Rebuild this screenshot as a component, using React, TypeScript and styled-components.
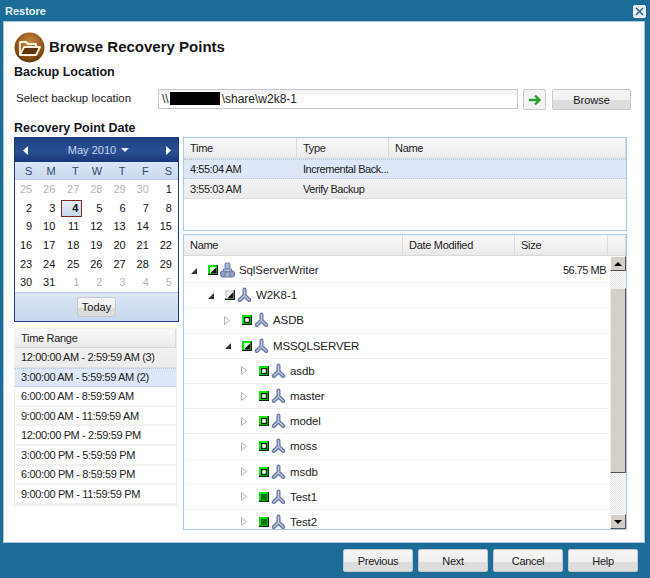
import React from "react";
import styled, { createGlobalStyle } from "styled-components";

const Global = createGlobalStyle`
  html, body { margin: 0; padding: 0; }
  body { font-family: "Liberation Sans", Arial, sans-serif; font-size: 11px; color: #1c1c1c; }
  * { box-sizing: border-box; }
`;

const days = [25, 26, 27, 28, 29, 30, 1, 2, 3, 4, 5, 6, 7, 8, 9, 10, 11, 12, 13, 14, 15, 16, 17, 18, 19, 20, 21, 22, 23, 24, 25, 26, 27, 28, 29, 30, 31, 1, 2, 3, 4, 5];

const ranges = [
  "12:00:00 AM - 2:59:59 AM (3)",
  "3:00:00 AM - 5:59:59 AM (2)",
  "6:00:00 AM - 8:59:59 AM",
  "9:00:00 AM - 11:59:59 AM",
  "12:00:00 PM - 2:59:59 PM",
  "3:00:00 PM - 5:59:59 PM",
  "6:00:00 PM - 8:59:59 PM",
  "9:00:00 PM - 11:59:59 PM",
];

type Status = "partial" | "mixed" | "hollow" | "full";
const tree: { name: string; depth: number; open: boolean; status: Status; size?: string; server?: boolean }[] = [
  { name: "SqlServerWriter", depth: 0, open: true, status: "partial", size: "56.75 MB", server: true },
  { name: "W2K8-1", depth: 1, open: true, status: "mixed" },
  { name: "ASDB", depth: 2, open: false, status: "hollow" },
  { name: "MSSQLSERVER", depth: 2, open: true, status: "partial" },
  { name: "asdb", depth: 3, open: false, status: "hollow" },
  { name: "master", depth: 3, open: false, status: "hollow" },
  { name: "model", depth: 3, open: false, status: "hollow" },
  { name: "moss", depth: 3, open: false, status: "hollow" },
  { name: "msdb", depth: 3, open: false, status: "hollow" },
  { name: "Test1", depth: 3, open: false, status: "full" },
  { name: "Test2", depth: 3, open: false, status: "full" },
];

function FolderLogo() {
  return (
    <svg width="31" height="31" viewBox="0 0 31 31">
      <defs>
        <radialGradient id="logoBall" cx="50%" cy="35%" r="70%">
          <stop offset="0%" stopColor="#c98a45" />
          <stop offset="65%" stopColor="#8f5518" />
          <stop offset="100%" stopColor="#4f2c08" />
        </radialGradient>
      </defs>
      <circle cx="15.5" cy="15.5" r="15" fill="url(#logoBall)" />
      <path d="M6 23 V10 H12 L14 12 H22 V15" fill="none" stroke="#fff4e2" strokeWidth="1.8" strokeLinejoin="round" />
      <path d="M6 23 L10 15 H26 L22 23 Z" fill="#5c3410" stroke="#fff4e2" strokeWidth="1.8" strokeLinejoin="round" />
    </svg>
  );
}

function NodeIcon() {
  return (
    <svg width="15" height="16" viewBox="0 0 15 16">
      <path d="M7.5 2.5 V8.5 L2.8 13 M7.5 8.5 L12.2 13" fill="none" stroke="#66769f" strokeWidth="4" strokeLinecap="round" strokeLinejoin="round" />
      <path d="M7.5 2.5 V8.5 L2.8 13 M7.5 8.5 L12.2 13" fill="none" stroke="#bcc8df" strokeWidth="1.5" strokeLinecap="round" strokeLinejoin="round" />
    </svg>
  );
}

function ServerIcon() {
  return (
    <svg width="15" height="16" viewBox="0 0 15 16">
      <rect x="5" y="1" width="5" height="6" rx="1.5" fill="#aab6d2" stroke="#66769f" />
      <path d="M3.5 7 H11.5 L12 10 H3 Z" fill="#c3cde2" stroke="#66769f" />
      <rect x="0.5" y="9" width="6.5" height="6" rx="2" fill="#8f9fc2" stroke="#66769f" />
      <rect x="8" y="9" width="6.5" height="6" rx="2" fill="#8f9fc2" stroke="#66769f" />
      <rect x="5" y="10" width="5" height="5" rx="1" fill="#a6b3d0" stroke="#66769f" />
    </svg>
  );
}

function StatusBox({ status }: { status: Status }) {
  const frame = status === "mixed" ? "#d8d8d8" : "#00e800";
  return (
    <svg width="10" height="10" viewBox="0 0 10 10">
      <rect width="10" height="10" fill={frame} />
      <path d="M10 0 V10 H0 V8.8 H8.8 V0 Z" fill="#0a1f0a" />
      {status === "hollow" && (
        <>
          <rect x="2" y="2" width="6" height="6" fill="#0a1f0a" />
          <rect x="3.2" y="3.2" width="3.6" height="3.6" fill="#fff" />
        </>
      )}
      {status === "full" && <rect x="2" y="2" width="6" height="6" fill="#08710a" />}
      {(status === "partial" || status === "mixed") && (
        <>
          <rect x="2" y="2" width="6.5" height="6.5" fill={status === "mixed" ? "#f2f2f2" : "#d6ffd6"} />
          <path d="M8.5 2 V8.5 H2 Z" fill="#111" />
        </>
      )}
    </svg>
  );
}

export default function App() {
  return (
    <Page>
      <Global />
      <TitleBar>
        <TitleText>Restore</TitleText>
        <CloseButton>
          <svg width="9" height="9" viewBox="0 0 9 9">
            <path d="M1 1 L8 8 M8 1 L1 8" stroke="#2b5f92" strokeWidth="1.4" />
          </svg>
        </CloseButton>
      </TitleBar>

      <Panel>
        <Heading>
          <FolderLogo />
          <HeadingText>Browse Recovery Points</HeadingText>
        </Heading>
        <SectionTitle>Backup Location</SectionTitle>
        <LocationRow>
          <FieldLabel>Select backup location</FieldLabel>
          <PathInput>
            \\<Redacted />\share\w2k8-1
          </PathInput>
          <GoButton>
            <svg width="14" height="12" viewBox="0 0 14 12">
              <path d="M1 6 H11 M7 1.5 L11.5 6 L7 10.5" fill="none" stroke="#2c9a2c" strokeWidth="2.4" />
            </svg>
          </GoButton>
          <BrowseButton>Browse</BrowseButton>
        </LocationRow>
        <DateTitle>Recovery Point Date</DateTitle>

        <Columns>
          <LeftColumn>
            <Calendar>
              <CalendarHead>
                <MonthArrow>
                  <svg width="5" height="9" viewBox="0 0 5 9"><path d="M5 0 V9 L0 4.5 Z" fill="#fff" /></svg>
                </MonthArrow>
                <MonthName>
                  May 2010
                  <svg width="8" height="4" viewBox="0 0 8 4"><path d="M0 0 H8 L4 4 Z" fill="#e6edf8" /></svg>
                </MonthName>
                <MonthArrow>
                  <svg width="5" height="9" viewBox="0 0 5 9"><path d="M0 0 V9 L5 4.5 Z" fill="#fff" /></svg>
                </MonthArrow>
              </CalendarHead>
              <WeekRow>
                {["S", "M", "T", "W", "T", "F", "S"].map((d, i) => (
                  <WeekDay key={i}>{d}</WeekDay>
                ))}
              </WeekRow>
              <DayGrid>
                {days.map((d, i) => (
                  <Day key={i} $muted={i < 6 || i > 36} $today={i === 9}>
                    {d}
                  </Day>
                ))}
              </DayGrid>
              <CalendarFoot>
                <TodayButton>Today</TodayButton>
              </CalendarFoot>
            </Calendar>

            <RangeList>
              <RangeHead>Time Range</RangeHead>
              {ranges.map((r, i) => (
                <RangeRow key={r} $kind={i === 0 ? "gray" : i === 1 ? "selected" : "plain"}>
                  {r}
                </RangeRow>
              ))}
            </RangeList>
          </LeftColumn>

          <RightColumn>
            <PointsTable>
              <PointsHead>
                <HeadCell>Time</HeadCell>
                <HeadCell>Type</HeadCell>
                <HeadCell>Name</HeadCell>
              </PointsHead>
              <PointRow $kind="selected">
                <span>4:55:04 AM</span>
                <span>Incremental Back...</span>
                <span />
              </PointRow>
              <PointRow $kind="gray">
                <span>3:55:03 AM</span>
                <span>Verify Backup</span>
                <span />
              </PointRow>
            </PointsTable>

            <FilesTable>
              <FilesHead>
                <HeadCell>Name</HeadCell>
                <HeadCell>Date Modified</HeadCell>
                <HeadCell>Size</HeadCell>
                <HeadCell />
              </FilesHead>
              <FilesBody>
                <TreeRows>
                  {tree.map((n) => (
                    <TreeRow key={n.name} $depth={n.depth}>
                      <Toggle>
                        {n.open ? (
                          <svg width="7" height="7" viewBox="0 0 7 7"><path d="M7 1 V7 H1 Z" fill="#333" /></svg>
                        ) : (
                          <svg width="6" height="9" viewBox="0 0 6 9"><path d="M0.5 0.5 V8.5 L5.5 4.5 Z" fill="#fff" stroke="#b5b5b5" /></svg>
                        )}
                      </Toggle>
                      <StatusBox status={n.status} />
                      {n.server ? <ServerIcon /> : <NodeIcon />}
                      <TreeName>{n.name}</TreeName>
                      {n.size && <TreeSize>{n.size}</TreeSize>}
                    </TreeRow>
                  ))}
                </TreeRows>
                <ScrollBar>
                  <ScrollButton>
                    <svg width="8" height="4" viewBox="0 0 8 4"><path d="M0 4 H8 L4 0 Z" fill="#000" /></svg>
                  </ScrollButton>
                  <ScrollGap $size={17} />
                  <ScrollThumb />
                  <ScrollGap $size={41} />
                  <ScrollButton>
                    <svg width="8" height="4" viewBox="0 0 8 4"><path d="M0 0 H8 L4 4 Z" fill="#000" /></svg>
                  </ScrollButton>
                </ScrollBar>
              </FilesBody>
            </FilesTable>
          </RightColumn>
        </Columns>
      </Panel>

      <Footer>
        <FootButton>Previous</FootButton>
        <FootButton>Next</FootButton>
        <FootButton>Cancel</FootButton>
        <FootButton>Help</FootButton>
      </Footer>
    </Page>
  );
}

const Page = styled.div`
  width: 650px;
  height: 578px;
  background: #1b6d97;
  display: flex;
  flex-direction: column;
  overflow: hidden;
`;

const TitleBar = styled.div`
  height: 22px;
  padding: 0 4px 0 5px;
  display: flex;
  align-items: center;
  justify-content: space-between;
`;

const TitleText = styled.div`
  color: #e8f2f8;
  font-size: 11px;
  font-weight: bold;
`;

const CloseButton = styled.div`
  width: 13px;
  height: 13px;
  border-radius: 2px;
  background: #e4edfa;
  border: 1px solid #f6f9fe;
  display: flex;
  align-items: center;
  justify-content: center;
`;

const Panel = styled.div`
  margin: 0 6px 0 4px;
  height: 520px;
  background: #fff;
  padding: 10px 0 0 10px;
  box-shadow: 0 0 0 1px #a9c6dd;
`;

const Heading = styled.div`
  height: 31px;
  display: flex;
  align-items: center;
  gap: 4px;
`;

const HeadingText = styled.h1`
  margin: 0 0 2px;
  font-size: 15px;
  font-weight: bold;
  color: #161616;
`;

const SectionTitle = styled.h2`
  margin: 2px 0 0;
  font-size: 12.5px;
  line-height: 15px;
  font-weight: bold;
  color: #14141e;
`;

const DateTitle = styled(SectionTitle)`
  margin: 11px 0 0;
`;

const LocationRow = styled.div`
  margin-top: 9px;
  height: 21px;
  display: flex;
  align-items: flex-start;
`;

const FieldLabel = styled.div`
  width: 144px;
  padding-left: 2px;
  font-size: 11.5px;
  line-height: 19px;
  color: #222;
`;

const PathInput = styled.div`
  width: 360px;
  height: 20px;
  padding-left: 3px;
  border: 1px solid #c3c7d6;
  font-size: 12px;
  line-height: 19px;
  white-space: nowrap;
  color: #222;
  background: linear-gradient(#f4f4f4 0, #f4f4f4 5px, #fff 5px);
`;

const Redacted = styled.span`
  display: inline-block;
  width: 50px;
  height: 13px;
  margin: 0 2px 0 1px;
  vertical-align: -2px;
  background: #000;
`;

const buttonFace = `
  border: 1px solid #c8c8c8;
  border-radius: 2px;
  background: linear-gradient(#f6f6f6 0, #f0f0f0 55%, #dcdcdc 55%, #dedede 100%);
  display: flex;
  align-items: center;
  justify-content: center;
  color: #1a1a1a;
`;

const GoButton = styled.div`
  ${buttonFace}
  width: 23px;
  height: 21px;
  margin-left: 5px;
  background: #f3f3f3;
`;

const BrowseButton = styled.div`
  ${buttonFace}
  width: 79px;
  height: 21px;
  margin-left: 6px;
`;

const Columns = styled.div`
  margin-top: 1px;
  display: flex;
  align-items: flex-start;
`;

const LeftColumn = styled.div`
  width: 169px;
`;

const Calendar = styled.div`
  width: 165px;
  height: 185px;
  border: 1px solid #1f3b78;
  display: flex;
  flex-direction: column;
`;

const CalendarHead = styled.div`
  height: 24px;
  flex: none;
  padding: 0 3px;
  display: flex;
  align-items: center;
  justify-content: space-between;
  background: linear-gradient(#1e4084, #2b4f94 55%, #183679);
`;

const MonthArrow = styled.div`
  width: 14px;
  height: 14px;
  display: flex;
  align-items: center;
  justify-content: center;
`;

const MonthName = styled.div`
  margin-left: 4px;
  display: flex;
  align-items: center;
  gap: 5px;
  color: #c6d6ee;
  font-size: 11px;
`;

const WeekRow = styled.div`
  height: 18px;
  flex: none;
  display: grid;
  grid-template-columns: repeat(7, 1fr);
  align-items: center;
  background: linear-gradient(#dce6f6, #c9d9f0);
  border-bottom: 1px solid #b8cbe6;
`;

const WeekDay = styled.div`
  text-align: right;
  padding-right: 6px;
  color: #33486e;
`;

const DayGrid = styled.div`
  display: grid;
  grid-template-columns: repeat(7, 1fr);
  grid-auto-rows: 18.7px;
  height: 112px;
  flex: none;
  background: #fff;
`;

const Day = styled.div<{ $muted: boolean; $today: boolean }>`
  text-align: right;
  padding-right: ${(p) => (p.$today ? "3px" : "6px")};
  line-height: ${(p) => (p.$today ? "15px" : "18px")};
  font-size: 11px;
  color: ${(p) => (p.$muted ? "#b4b4b4" : "#111")};
  ${(p) =>
    p.$today &&
    `font-weight: bold;
     margin: 1px 3px 0 0;
     width: 21px;
     height: 17px;
     justify-self: end;
     border: 1px solid #7d2a22;
     background: linear-gradient(#e8eef8, #c8d8ee);`}
`;

const CalendarFoot = styled.div`
  flex: 1;
  display: flex;
  align-items: center;
  justify-content: center;
  border-top: 1px solid #b8cbe6;
  background: linear-gradient(#dbe5f5, #c7d8f0);
`;

const TodayButton = styled.div`
  ${buttonFace}
  width: 39px;
  height: 20px;
  border-radius: 3px;
`;

const RangeList = styled.div`
  margin-top: 6px;
  width: 163px;
  border: 1px solid #f0f0f0;
`;

const HeadCell = styled.div`
  height: 100%;
  padding-left: 6px;
  display: flex;
  align-items: center;
  letter-spacing: -0.3px;
  color: #222;
  background: linear-gradient(#f8f8f8, #f3f3f3 50%, #e9e9e9);
  border-right: 1px solid #dcdcdc;
  border-bottom: 1px solid #d8d8d8;
`;

const RangeHead = styled(HeadCell)`
  height: 19px;
`;

const rowKinds = {
  selected: "background: #dde7f7; border-top: 1px dotted #b7c6de; border-bottom: 1px dotted #b7c6de;",
  gray: "background: linear-gradient(#f2f2f2, #ececec); border-bottom: 1px solid #dedede;",
  plain: "background: #fff; border-bottom: 2px solid #f1f1f1;",
};

const RangeRow = styled.div<{ $kind: keyof typeof rowKinds }>`
  height: 19.6px;
  padding-left: 6px;
  display: flex;
  align-items: center;
  font-size: 11px;
  letter-spacing: -0.36px;
  color: #222;
  ${(p) => rowKinds[p.$kind]}
`;

const RightColumn = styled.div`
  width: 444px;
  display: flex;
  flex-direction: column;
  gap: 3px;
`;

const PointsTable = styled.div`
  height: 94px;
  border: 1px solid #a9c8ee;
`;

const PointsHead = styled.div`
  height: 21px;
  display: grid;
  grid-template-columns: 113px 92px 1fr;
`;

const PointRow = styled.div<{ $kind: keyof typeof rowKinds }>`
  height: 20px;
  display: grid;
  grid-template-columns: 113px 92px 1fr;
  align-items: center;
  font-size: 11px;
  letter-spacing: -0.45px;
  color: #222;
  span { padding-left: 6px; white-space: nowrap; }
  ${(p) => rowKinds[p.$kind]}
`;

const FilesTable = styled.div`
  height: 296px;
  border: 1px solid #a9c8ee;
  display: flex;
  flex-direction: column;
`;

const FilesHead = styled.div`
  height: 21px;
  flex: none;
  display: grid;
  grid-template-columns: 219px 112px 93px 1fr;
`;

const FilesBody = styled.div`
  flex: 1;
  min-height: 0;
  display: flex;
`;

const TreeRows = styled.div`
  flex: 1;
  padding-top: 2px;
  overflow: hidden;
`;

const TreeRow = styled.div<{ $depth: number }>`
  height: 25.2px;
  display: flex;
  align-items: center;
  gap: 2px;
  padding-left: ${(p) => 6 + p.$depth * 17}px;
  padding-right: 3px;
  border-bottom: 1px solid #f0f0f0;
  font-size: 11.5px;
  letter-spacing: -0.1px;
  color: #222;
`;

const Toggle = styled.div`
  width: 16px;
  display: flex;
  align-items: center;
`;

const TreeName = styled.span`
  margin-left: 2px;
`;

const TreeSize = styled.span`
  margin-left: auto;
  font-size: 11px;
  letter-spacing: -0.5px;
`;

const ScrollBar = styled.div`
  width: 16px;
  flex: none;
  display: flex;
  flex-direction: column;
  margin-left: 1px;
`;

const ScrollButton = styled.div`
  height: 15px;
  flex: none;
  display: flex;
  align-items: center;
  justify-content: center;
  background: #d4d0c8;
  border-right: 1px solid #555;
  border-bottom: 1px solid #555;
  border-top: 1px solid #fff;
  border-left: 1px solid #fff;
`;

const ScrollGap = styled.div<{ $size: number }>`
  height: ${(p) => p.$size}px;
  flex: none;
  background: repeating-conic-gradient(#e6e6e6 0 25%, #fafafa 0 50%) 0 0 / 2px 2px;
`;

const ScrollThumb = styled.div`
  flex: 1;
  background: #d4d0c8;
  border-right: 1px solid #555;
  border-bottom: 1px solid #555;
  border-top: 1px solid #eee;
  border-left: 1px solid #eee;
`;

const Footer = styled.div`
  flex: 1;
  padding: 7px 12px 0 0;
  display: flex;
  justify-content: flex-end;
  align-items: flex-start;
  gap: 5px;
`;

const FootButton = styled.div`
  ${buttonFace}
  width: 70px;
  height: 23px;
  letter-spacing: -0.3px;
`;
